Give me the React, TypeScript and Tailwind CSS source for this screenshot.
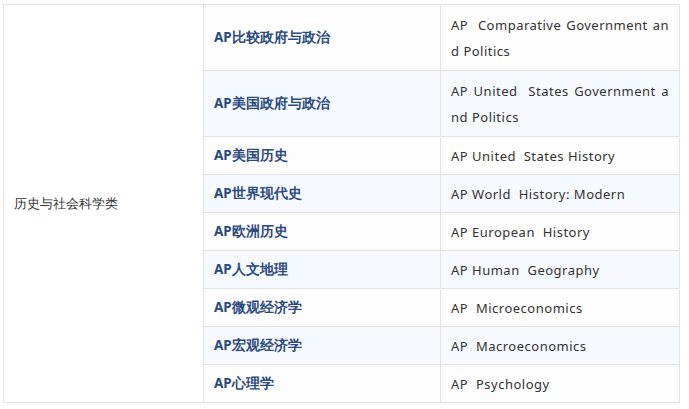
const rows: [string, string, boolean?][] = [
  ["AP比较政府与政治", "AP  Comparative Government and Politics", true],
  ["AP美国政府与政治", "AP United  States Government and Politics", true],
  ["AP美国历史", "AP United  States History"],
  ["AP世界现代史", "AP World  History: Modern"],
  ["AP欧洲历史", "AP European  History"],
  ["AP人文地理", "AP Human  Geography"],
  ["AP微观经济学", "AP  Microeconomics"],
  ["AP宏观经济学", "AP  Macroeconomics"],
  ["AP心理学", "AP  Psychology"],
];

export default function App() {
  return (
    <div className="h-[409px] w-[689px] bg-white pl-[3px] pt-[4px] font-['Noto_Sans','Noto_Sans_CJK_SC',sans-serif] text-[13px] text-[#333]">
      <table className="w-[677px] border-collapse">
        <tbody>
          {rows.map(([zh, en, two], i) => (
            <tr key={zh} className={i % 2 ? "bg-[#f6f9fe]" : "bg-[#fdfdfd]"}>
              {i === 0 && (
                <td rowSpan={rows.length} className="w-[200px] border border-[#e3e3e3] bg-white px-[10px] align-middle">
                  历史与社会科学类
                </td>
              )}
              <td className={`w-[237px] border border-[#e3e3e3] px-[10px] text-[13.5px] font-bold text-[#2b4b7e] ${two ? "h-[66px]" : "h-[38px]"}`}>
                {zh}
              </td>
              <td className="border border-[#e3e3e3] px-[10px] py-[1px] leading-[26px] tracking-[0.5px]">
                <div className="whitespace-pre-wrap break-all text-justify">{en}</div>
              </td>
            </tr>
          ))}
        </tbody>
      </table>
    </div>
  );
}
